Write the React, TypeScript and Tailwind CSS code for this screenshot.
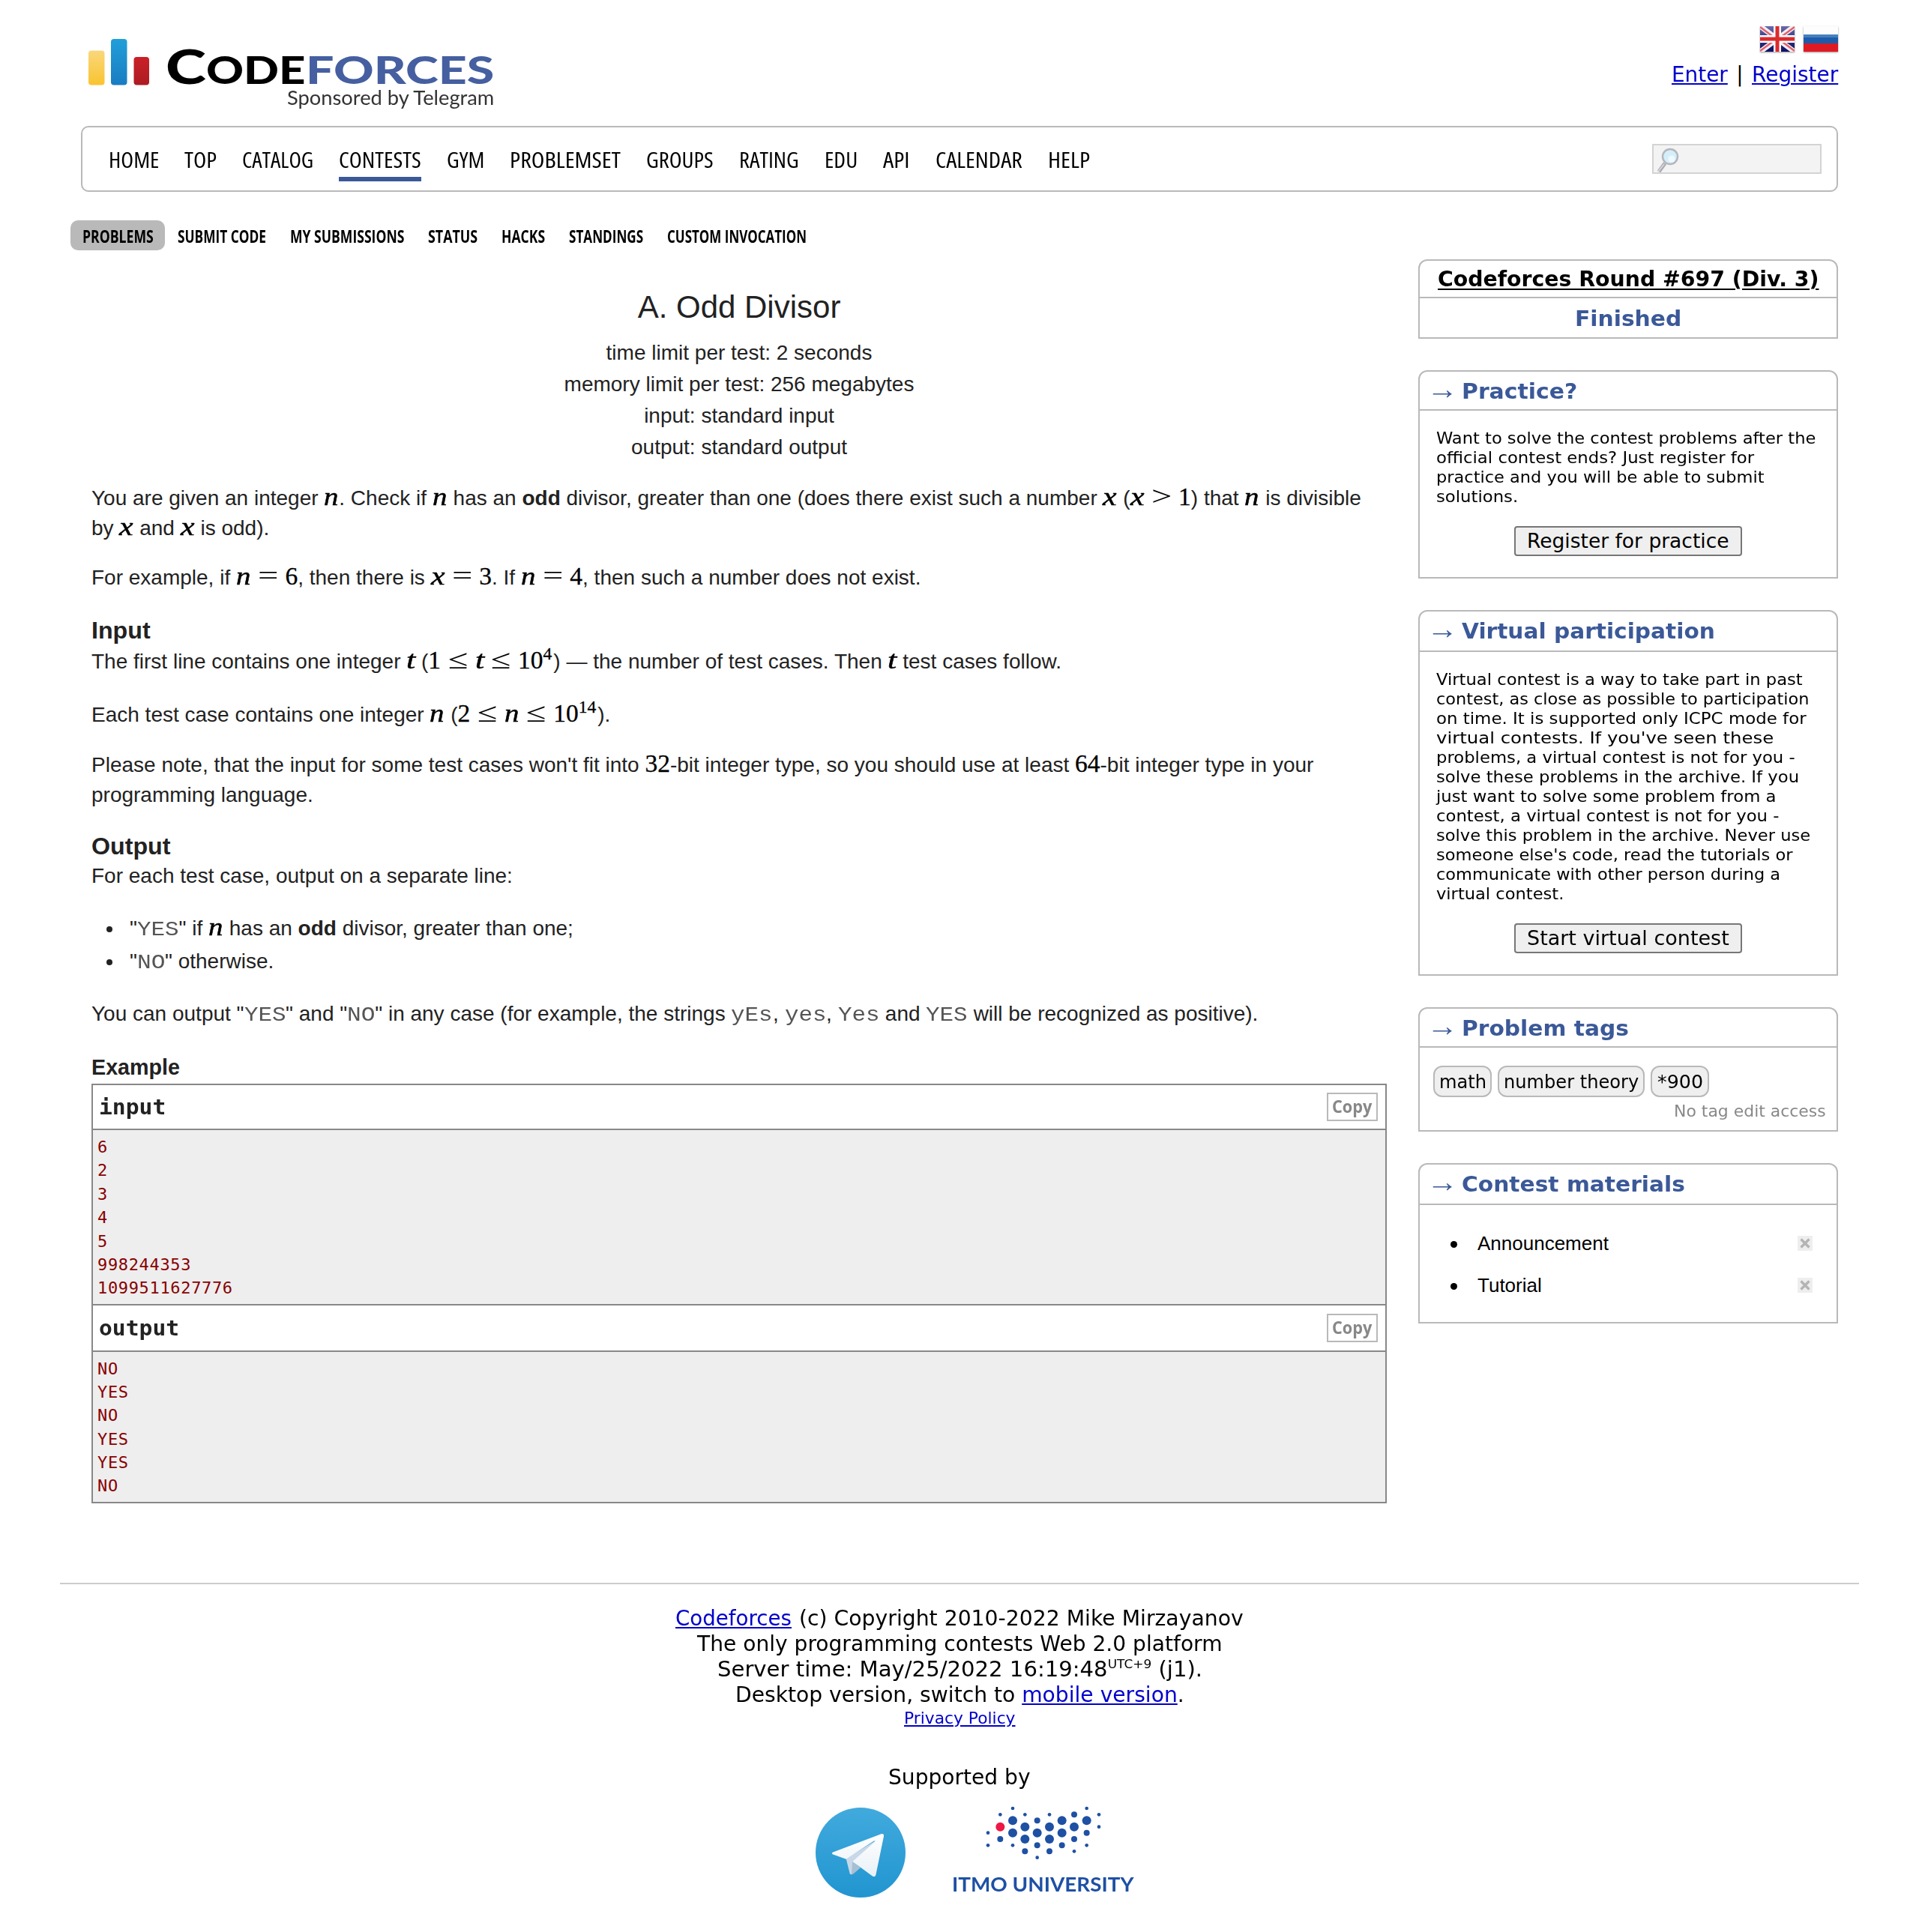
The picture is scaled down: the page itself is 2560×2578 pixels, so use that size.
import { useLayoutEffect, useRef, useState } from "react";
import type { ReactNode } from "react";

/* Text squeezed or widened to the exact width of its box. */
function Fit({ className = "", children }: { className?: string; children: ReactNode }) {
  const outer = useRef<HTMLSpanElement>(null);
  const inner = useRef<HTMLSpanElement>(null);
  const [scale, setScale] = useState(1);
  useLayoutEffect(() => {
    if (outer.current && inner.current && inner.current.offsetWidth > 0) {
      setScale(outer.current.clientWidth / inner.current.offsetWidth);
    }
  }, []);
  return (
    <span ref={outer} className={"inline-block shrink-0 text-left whitespace-nowrap " + className}>
      <span ref={inner} className="inline-block origin-left" style={{ transform: `scaleX(${scale})` }}>
        {children}
      </span>
    </span>
  );
}

const VERDANA = "font-['DejaVu_Sans',sans-serif]";
const LINK = "text-[#0000cc] underline decoration-2 underline-offset-2";

const NAV = [
  ["HOME", "w-[67px]"],
  ["TOP", "w-[43px]"],
  ["CATALOG", "w-[95px]"],
  ["CONTESTS", "w-[110px]"],
  ["GYM", "w-[50px]"],
  ["PROBLEMSET", "w-[148px]"],
  ["GROUPS", "w-[90px]"],
  ["RATING", "w-[80px]"],
  ["EDU", "w-[44px]"],
  ["API", "w-[36px]"],
  ["CALENDAR", "w-[116px]"],
  ["HELP", "w-[56px]"],
];

const SUBNAV = [
  ["SUBMIT CODE", "w-[118px]"],
  ["MY SUBMISSIONS", "w-[152px]"],
  ["STATUS", "w-[66px]"],
  ["HACKS", "w-[58px]"],
  ["STANDINGS", "w-[99px]"],
  ["CUSTOM INVOCATION", "w-[186px]"],
];

const PRACTICE = [
  ["Want to solve the contest problems after the", "w-[506px]"],
  ["official contest ends? Just register for", "w-[424px]"],
  ["practice and you will be able to submit", "w-[438px]"],
  ["solutions.", "w-[109px]"],
];

const VIRTUAL = [
  ["Virtual contest is a way to take part in past", "w-[489px]"],
  ["contest, as close as possible to participation", "w-[497px]"],
  ["on time. It is supported only ICPC mode for", "w-[494px]"],
  ["virtual contests. If you've seen these", "w-[450px]"],
  ["problems, a virtual contest is not for you -", "w-[479px]"],
  ["solve these problems in the archive. If you", "w-[484px]"],
  ["just want to solve some problem from a", "w-[453px]"],
  ["contest, a virtual contest is not for you -", "w-[457px]"],
  ["solve this problem in the archive. Never use", "w-[499px]"],
  ["someone else's code, read the tutorials or", "w-[475px]"],
  ["communicate with other person during a", "w-[459px]"],
  ["virtual contest.", "w-[170px]"],
];

/* ---------- math ---------- */

function V({ children }: { children: string }) {
  const w = children === "t" ? "w-3" : children === "x" ? "w-[19px]" : "w-5";
  return (
    <Fit className={"font-['Liberation_Serif',serif] text-[33px] leading-none text-black italic [-webkit-text-stroke:0.5px_black] " + w}>
      {children}
    </Fit>
  );
}
function D({ children }: { children: string }) {
  return (
    <span className="font-['Liberation_Serif',serif] text-[33.5px] leading-none text-black [-webkit-text-stroke:0.3px_black]">
      {children}
    </span>
  );
}
function R({ children }: { children: string }) {
  return (
    <Fit className="mx-[9.5px] w-[26.5px] font-['Liberation_Serif',serif] text-[36px] leading-none text-black">{children}</Fit>
  );
}
function Sup({ children }: { children: string }) {
  return (
    <span className="relative -top-3 mr-[2px] font-['Liberation_Serif',serif] text-[23.5px] leading-none text-black [-webkit-text-stroke:0.3px_black]">
      {children}
    </span>
  );
}
function T({ children }: { children: string }) {
  const w = children.length === 2 ? "w-[37px]" : "w-[55.5px]";
  return <Fit className={"font-['Liberation_Mono',monospace] text-[27px] leading-none text-[#555] " + w}>{children}</Fit>;
}
function Line({ className = "", children }: { className?: string; children: ReactNode }) {
  return <div className={"h-10 leading-10 whitespace-nowrap " + className}>{children}</div>;
}

/* ---------- header ---------- */

function Header() {
  return (
    <header className="flex h-[168px] justify-between pr-[108px] pl-[118px]">
      <div className="flex">
        <svg className="mt-[51px] h-[63px] w-[82px]" viewBox="0 0 82 63">
          <defs>
            <linearGradient id="y" x1="0" y1="0" x2="0" y2="1"><stop offset="0" stopColor="#fad77c" /><stop offset="1" stopColor="#f9c42f" /></linearGradient>
            <linearGradient id="b" x1="0" y1="0" x2="0" y2="1"><stop offset="0" stopColor="#209fd9" /><stop offset="1" stopColor="#1a7cc2" /></linearGradient>
            <linearGradient id="r" x1="0" y1="0" x2="0" y2="1"><stop offset="0" stopColor="#cb2027" /><stop offset="1" stopColor="#ac1c22" /></linearGradient>
          </defs>
          <rect x="0" y="16.500" width="21.500" height="46" rx="4" fill="url(#y)" />
          <rect x="30" y="1" width="21.500" height="61.500" rx="4" fill="url(#b)" />
          <rect x="60.500" y="25" width="20.500" height="37.500" rx="4" fill="url(#r)" />
        </svg>
        <div className="ml-[21px] flex flex-col items-end pt-[62px] font-['Lato',sans-serif]">
          <div className="flex h-[50px] items-baseline font-black">
            <Fit className="w-[54px] text-[62px] leading-[52px] text-black">C</Fit>
            <Fit className="w-[133px] text-[52px] leading-10 text-black">ODE</Fit>
            <Fit className="w-[251px] text-[52px] leading-10 text-[#455fa0]">FORCES</Fit>
          </div>
          <Fit className="mt-[5px] w-[276px] text-[26.5px] leading-[27px] text-[#333]">Sponsored by Telegram</Fit>
        </div>
      </div>
      <div className={"flex flex-col items-end text-[27.5px] " + VERDANA}>
        <div className="mt-[35px] flex h-[34px] gap-3">
          <svg className="h-[34px] w-[46px] drop-shadow-[0_1px_1px_rgba(0,0,0,0.4)]" viewBox="0 0 46 34">
            <defs>
              <linearGradient id="uk" x1="0" y1="0" x2="0" y2="1"><stop offset="0" stopColor="#6a6cab" /><stop offset="0.5" stopColor="#34377f" /><stop offset="1" stopColor="#0b0f63" /></linearGradient>
            </defs>
            <rect width="46" height="34" fill="url(#uk)" />
            <path d="M0 0L46 34M46 0L0 34" stroke="#f3eef3" strokeWidth="7" />
            <path d="M0 1L20 16M46 1L27 15M0 33L19 19M46 33L26 18" stroke="#e2606c" strokeWidth="2.400" />
            <path d="M23 0V34M0 17H46" stroke="#fff" strokeWidth="10" />
            <path d="M23 0V34M0 17H46" stroke="#dc2a2e" strokeWidth="5" />
          </svg>
          <svg className="h-[34px] w-[46px] drop-shadow-[0_1px_1px_rgba(0,0,0,0.4)]" viewBox="0 0 46 34">
            <rect width="46" height="34" fill="#fdfdfd" />
            <rect y="11" width="46" height="12" fill="#1c5cab" />
            <rect y="11" width="46" height="4" fill="#4680bd" />
            <rect y="23" width="46" height="11" fill="#df1a22" />
          </svg>
        </div>
        <div className="mt-[14px] flex h-8 leading-8">
          <Fit className="w-[75px]"><span className={LINK}>Enter</span></Fit>
          <span className="w-[32px] text-center">|</span>
          <Fit className="w-[115px]"><span className={LINK}>Register</span></Fit>
        </div>
      </div>
    </header>
  );
}

function Nav() {
  return (
    <nav className="mx-[108px] flex h-[88px] items-start justify-between rounded-[10px] border-2 border-[#b9b9b9] pr-5 pl-[35px]">
      <div className="flex gap-[34px] pt-7 font-['Open_Sans',sans-serif] text-[29.5px] leading-[30px] text-black">
        {NAV.map(([label, w]) => (
          <div key={label} className={"h-11 border-b-[6px] " + (label === "CONTESTS" ? "border-[#3b5998]" : "border-transparent")}>
            <Fit className={w}><span className="font-stretch-condensed">{label}</span></Fit>
          </div>
        ))}
      </div>
      <div className="mt-[22px] h-10 w-[226px] border-2 border-[#d3d3d3] bg-[#f3f3f3]">
        <svg className="ml-[3px] h-9 w-9" viewBox="0 0 36 36">
          <path d="M12 24L4 35" stroke="#a9a9b0" strokeWidth="5" />
          <path d="M11 25L3 35" stroke="#d7d7de" strokeWidth="2" />
          <circle cx="19" cy="15" r="10" fill="#d5effa" stroke="#b4b7bc" strokeWidth="2.500" />
          <circle cx="21" cy="18" r="4.500" fill="#eefaff" />
        </svg>
      </div>
    </nav>
  );
}

/* ---------- problem ---------- */

function SampleHead({ children, className }: { children: ReactNode; className: string }) {
  return (
    <div className={"flex items-center justify-between border-b-2 border-[#888] pr-[10px] pl-2 " + className}>
      {children}
      <div className="flex h-[38px] w-[68px] items-center justify-center border-2 border-[#b9b9b9] pr-[2px] font-['Open_Sans',sans-serif] text-[22.5px] leading-none font-bold text-[#888]">
        <Fit className="w-[53px]">Copy</Fit>
      </div>
    </div>
  );
}

function Problem() {
  return (
    <main className="w-[1728px] pt-14 font-['Liberation_Sans',sans-serif] text-[28px] text-[#222]">
      <Line className="text-center text-[42px]">A. Odd Divisor</Line>
      <div className="mt-5 text-center leading-[42px]">
        <div>time limit per test: 2 seconds</div>
        <div>memory limit per test: 256 megabytes</div>
        <div>input: standard input</div>
        <div>output: standard output</div>
      </div>
      <Line className="mt-[26px]">
        You are given an integer <V>n</V>. Check if <V>n</V> has an <b>odd</b> divisor, greater than one (does there exist such a
        number <V>x</V> (<V>x</V><R>&gt;</R><D>1</D>) that <V>n</V> is divisible
      </Line>
      <Line className="mt-px">by <V>x</V> and <V>x</V> is odd).</Line>
      <Line className="mt-[25px]">
        For example, if <V>n</V><R>=</R><D>6</D>, then there is <V>x</V><R>=</R><D>3</D>. If <V>n</V><R>=</R><D>4</D>, then such a
        number does not exist.
      </Line>
      <Line className="mt-[31px] text-[32.200px] font-bold">Input</Line>
      <Line className="mt-px">
        The first line contains one integer <V>t</V> (<D>1</D><R>≤</R><V>t</V><R>≤</R><D>10</D><Sup>4</Sup>) — the number of test
        cases. Then <V>t</V> test cases follow.
      </Line>
      <Line className="mt-[31px]">
        Each test case contains one integer <V>n</V> (<D>2</D><R>≤</R><V>n</V><R>≤</R><D>10</D><Sup>14</Sup>).
      </Line>
      <Line className="mt-7">
        Please note, that the input for some test cases won't fit into <D>32</D>-bit integer type, so you should use at least{" "}
        <D>64</D>-bit integer type in your
      </Line>
      <Line>programming language.</Line>
      <Line className="mt-7 text-[32.200px] font-bold">Output</Line>
      <Line>For each test case, output on a separate line:</Line>
      <ul className="mt-[30px] flex flex-col gap-1">
        <li className="flex">
          <span className="mt-[17px] mr-[23px] ml-5 size-2 rounded-full bg-[#222]" />
          <Line>"<T>YES</T>" if <V>n</V> has an <b>odd</b> divisor, greater than one;</Line>
        </li>
        <li className="flex">
          <span className="mt-[17px] mr-[23px] ml-5 size-2 rounded-full bg-[#222]" />
          <Line>"<T>NO</T>" otherwise.</Line>
        </li>
      </ul>
      <Line className="mt-[30px]">
        You can output "<T>YES</T>" and "<T>NO</T>" in any case (for example, the strings <T>yEs</T>, <T>yes</T>, <T>Yes</T> and{" "}
        <T>YES</T> will be recognized as positive).
      </Line>
      <Line className="mt-[31px] text-[28.700px] font-bold">Example</Line>
      <div className="mt-[2px] h-[560px] border-2 border-[#888] font-['DejaVu_Sans_Mono',monospace]">
        <SampleHead className="h-[60px]"><Fit className="w-[89px] pt-[2px] text-[28px] font-bold">input</Fit></SampleHead>
        <pre className="h-[234px] border-b-2 border-[#888] bg-[#eee] pt-[7px] pl-[6px] font-['DejaVu_Sans_Mono',monospace] text-[22px] leading-[31.4px] tracking-[0.66px] text-[#880000]">
          {"6\n2\n3\n4\n5\n998244353\n1099511627776"}
        </pre>
        <SampleHead className="h-[62px]"><Fit className="w-[107px] pt-[2px] text-[28px] font-bold">output</Fit></SampleHead>
        <pre className="h-[200px] bg-[#eee] pt-[7px] pl-[6px] font-['DejaVu_Sans_Mono',monospace] text-[22px] leading-[31.2px] tracking-[0.66px] text-[#880000]">
          {"NO\nYES\nNO\nYES\nYES\nNO"}
        </pre>
      </div>
    </main>
  );
}

/* ---------- sidebar ---------- */

function Box({ title, titleWidth, headClass, className, children }: {
  title: string; titleWidth: string; headClass: string; className: string; children: ReactNode;
}) {
  return (
    <section className={"rounded-t-xl border-2 border-[#b9b9b9] " + className}>
      <div className={"flex border-b-2 border-[#b9b9b9] pl-[9px] text-[28.5px] leading-[53px] font-bold text-[#3b5998] " + headClass}>
        <Fit className="w-[42px] font-['Liberation_Serif',serif] text-[38px] leading-[46px] font-normal">→</Fit>
        <Fit className={"ml-[5px] " + titleWidth}>{title}</Fit>
      </div>
      {children}
    </section>
  );
}

function Paragraph({ lines }: { lines: string[][] }) {
  return (
    <div className="pt-[23.6px] pl-[22px] text-[21.5px] leading-[26px]">
      {lines.map(([text, w]) => (
        <div key={text} className="h-[26px]"><Fit className={w}>{text}</Fit></div>
      ))}
    </div>
  );
}

function Button({ children }: { children: string }) {
  return (
    <button className="mx-auto mt-[26.4px] flex h-10 w-[304px] items-center justify-center rounded border-2 border-[#767676] bg-[#efefef] text-[26.5px] leading-none">
      <Fit className="w-[270px]">{children}</Fit>
    </button>
  );
}

function Tag({ width, text, children }: { width: string; text: string; children: string }) {
  return (
    <div className={"flex h-[42px] justify-center rounded-xl border-2 border-[#b9b9b9] bg-[#efefef] text-[24.5px] leading-10 " + width}>
      <Fit className={text}>{children}</Fit>
    </div>
  );
}

function Material({ width, children }: { width: string; children: string }) {
  return (
    <li className="flex h-[34px] items-center leading-[34px]">
      <span className="mt-[2px] size-[9px] rounded-full bg-black" />
      <Fit className={"ml-[27px] " + width}>{children}</Fit>
      <svg className="mr-8 ml-auto h-5 w-5 bg-[#eee]" viewBox="0 0 20 20">
        <path d="M4.500 4.500L15.500 15.500M15.500 4.500L4.500 15.500" stroke="#b4b4b4" strokeWidth="3.200" />
      </svg>
    </li>
  );
}

function Sidebar() {
  return (
    <aside className={"flex w-[560px] flex-col gap-[42px] pt-3 text-black " + VERDANA}>
      <section className="h-[106px] rounded-t-xl border-2 border-[#b9b9b9] text-center font-bold">
        <div className="h-[50px] border-b-2 border-[#b9b9b9] text-[27.5px] leading-[48px]">
          <Fit className="w-[508px]"><span className="underline decoration-2 underline-offset-[3px]">Codeforces Round #697 (Div. 3)</span></Fit>
        </div>
        <div className="pt-px text-[28.5px] leading-[53px] text-[#3b5998]"><Fit className="w-[142px]">Finished</Fit></div>
      </section>
      <Box title="Practice?" titleWidth="w-[154px]" headClass="h-[52px]" className="h-[278px]">
        <Paragraph lines={PRACTICE} />
        <Button>Register for practice</Button>
      </Box>
      <Box title="Virtual participation" titleWidth="w-[338px]" headClass="h-[54px]" className="h-[488px]">
        <Paragraph lines={VIRTUAL} />
        <Button>Start virtual contest</Button>
      </Box>
      <Box title="Problem tags" titleWidth="w-[223px]" headClass="h-[52px]" className="h-[166px]">
        <div className="mt-6 ml-[18px] flex gap-2">
          <Tag width="w-[78px]" text="w-[63px]">math</Tag>
          <Tag width="w-[196px]" text="w-[180px]">number theory</Tag>
          <Tag width="w-[78px]" text="w-[61px]">*900</Tag>
        </div>
        <div className="mt-[5.6px] pr-[14px] text-right text-[21.5px] leading-[26px] text-[#888]">
          <Fit className="w-[203px]">No tag edit access</Fit>
        </div>
      </Box>
      <Box title="Contest materials" titleWidth="w-[298px]" headClass="h-[54px]" className="h-[214px]">
        <ul className="mt-[34px] flex flex-col gap-[22px] pl-[41px] font-['Liberation_Sans',sans-serif] text-[26px]">
          <Material width="w-[175px]">Announcement</Material>
          <Material width="w-[86px]">Tutorial</Material>
        </ul>
      </Box>
    </aside>
  );
}

/* ---------- footer ---------- */

const DOTS: [number, number, number][] = [
  [873, 399, 7], [1169, 399, 7], [823, 424, 7], [922, 424, 7], [1020, 424, 7], [1119, 424, 12], [1218, 424, 7],
  [873, 448, 18], [971, 448, 12], [1070, 448, 18], [1169, 448, 18],
  [922, 473, 18], [1020, 473, 18], [1119, 473, 18], [1218, 473, 7],
  [774, 497, 7], [873, 497, 18], [971, 497, 18], [1070, 497, 18], [1169, 497, 12],
  [823, 522, 12], [922, 522, 18], [1020, 522, 18], [1119, 522, 12],
  [774, 547, 7], [873, 547, 7], [971, 547, 12], [1070, 547, 12], [1169, 547, 7],
  [922, 571, 12], [1020, 571, 12], [1119, 571, 7], [971, 596, 7],
];

function Footer() {
  return (
    <footer className={"mt-[106px] text-black " + VERDANA}>
      <div className="mx-20 h-[2px] bg-[#ccc]" />
      <div className="mt-7 flex flex-col items-center text-[27.5px] leading-[34px]">
        <div className="flex">
          <Fit className="w-[155px]"><span className={LINK}>Codeforces</span></Fit>
          <Fit className="ml-[10px] w-[593px]">(c) Copyright 2010-2022 Mike Mirzayanov</Fit>
        </div>
        <Fit className="w-[701px]">The only programming contests Web 2.0 platform</Fit>
        <Fit className="w-[647px]">
          Server time: May/25/2022 16:19:48<span className="relative -top-[11px] text-[16px] leading-none">UTC+9</span> (j1).
        </Fit>
        <Fit className="w-[599px]">Desktop version, switch to <span className={LINK}>mobile version</span>.</Fit>
        <Fit className="mt-[1.5px] w-[149px] text-[21.5px] leading-[26px]"><span className={LINK}>Privacy Policy</span></Fit>
        <Fit className="mt-[48.5px] w-[190px]">Supported by</Fit>
      </div>
      <div className="mt-[23.5px] ml-[1088px] flex gap-16">
        <svg className="size-[120px]" viewBox="84 396 360 360">
          <defs>
            <linearGradient id="tg" x1="0" y1="0" x2="0" y2="1"><stop offset="0" stopColor="#41aadd" /><stop offset="1" stopColor="#2195d0" /></linearGradient>
            <linearGradient id="pl" x1="0" y1="0" x2="0" y2="1"><stop offset="0" stopColor="#ffffff" /><stop offset="1" stopColor="#e9f1f7" /></linearGradient>
          </defs>
          <circle cx="264" cy="576" r="180" fill="url(#tg)" />
          <path d="M206 600L330 525L240 612L230 662Q225 667 221 660Z" fill="#c8d8e8" />
          <path d="M232 610L264 637L234 662Q230 665 228 661Z" fill="#a5bfd4" />
          <path d="M152 575L348 501Q358 499 357 511L325 666Q323 675 313 671L232 612L322 532Q324 526 316 530L206 602L152 583Q147 579 152 575Z" fill="url(#pl)" />
        </svg>
        <div className="w-60">
          <svg className="h-20 w-60 overflow-visible" viewBox="636 396 720 240">
            {DOTS.map(([x, y, r]) => (
              <circle key={`${x}-${y}`} cx={x} cy={y} r={r} fill="#1e50a4" />
            ))}
            <circle cx="823" cy="473" r="18" fill="#ee1745" />
          </svg>
          <div className="mt-2 -ml-[2px] h-7 font-['Lato',sans-serif] text-[27.5px] leading-7 font-bold text-[#1e50a4]">
            <Fit className="w-[242px]">ITMO UNIVERSITY</Fit>
          </div>
        </div>
      </div>
    </footer>
  );
}

export default function App() {
  return (
    <div className="h-[2578px] w-[2560px] overflow-hidden bg-white">
      <Header />
      <Nav />
      <div className="mt-[38px] ml-[94px] flex h-10 gap-8 font-['Open_Sans',sans-serif] text-[23px] leading-[42px] font-bold text-black">
        <div className="-mr-[15px] w-[126px] rounded-[10px] bg-[#b9b9b9] pl-4"><Fit className="w-[95px]">PROBLEMS</Fit></div>
        {SUBNAV.map(([label, w]) => (
          <Fit key={label} className={w}>{label}</Fit>
        ))}
      </div>
      <div className="flex gap-[42px] pl-[122px]">
        <Problem />
        <Sidebar />
      </div>
      <Footer />
    </div>
  );
}
